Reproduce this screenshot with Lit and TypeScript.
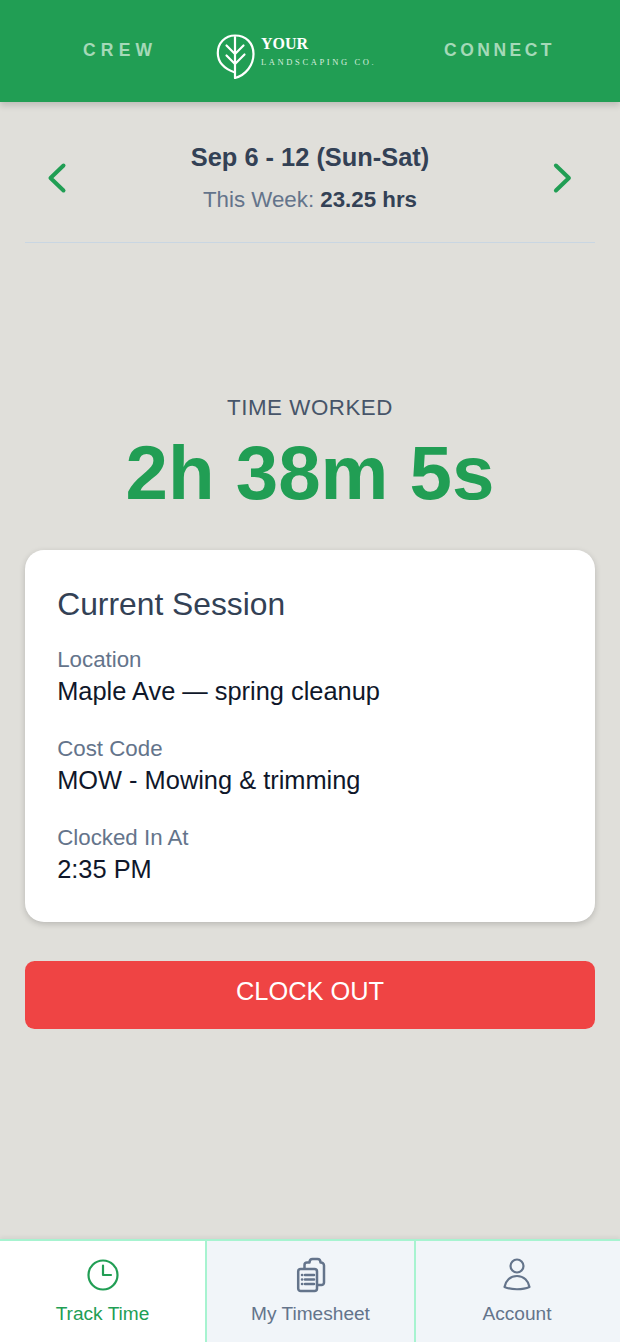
import { LitElement, html, css } from "lit";
import { customElement } from "lit/decorators.js";

@customElement("app-root")
export class AppRoot extends LitElement {
  static styles = css`
    :host { display: flex; flex-direction: column; width: 620px; height: 1342px; background: #e0dfda; font-family: "Liberation Sans", Arial, sans-serif; overflow: hidden; }
    .header { height: 102px; flex: none; box-sizing: border-box; padding: 0 0 0 83px; background: #219e54; box-shadow: 0 4px 6px rgba(0,0,0,.14); display: flex; align-items: center; position: relative; }
    .hlink { font-size: 17.5px; font-weight: 700; color: #a5d9b8; padding-bottom: 2px; }
    .crew { letter-spacing: 5.2px; width: 133px; }
    .connect { letter-spacing: 3.5px; margin-left: 69px; }
    .logo { display: flex; align-items: flex-start; gap: 5px; width: 159px; height: 46px; margin-top: 11px; }
    .logo svg { width: 40px; height: 46px; display: block; flex: none; }
    .logotext { display: flex; flex-direction: column; font-family: "Liberation Serif", serif; color: #fff; }
    .your { font-size: 16px; font-weight: 700; line-height: 18px; margin-top: 1px; }
    .co { font-size: 8.5px; letter-spacing: 2.62px; line-height: 10px; margin-top: 4px; color: #d5eddf; white-space: nowrap; }
    .week { margin: 0 25.4px; height: 141px; flex: none; border-bottom: 1px solid #c9d6e2; display: flex; align-items: center; justify-content: space-between; box-sizing: border-box; padding-top: 12px; }
    .week svg { width: 40px; height: 40px; display: block; flex: none; margin: 0 12px; }
    .weekmid { text-align: center; }
    .range { font-size: 25.4px; font-weight: 700; color: #334155; line-height: 30px; }
    .hours { font-size: 22.3px; color: #64748b; line-height: 30px; margin-top: 13px; }
    .hours b { color: #334155; }
    .timer { margin-top: 150px; text-align: center; flex: none; }
    .tlabel { font-size: 22.3px; color: #475569; line-height: 30px; letter-spacing: .56px; }
    .tvalue { font-size: 76.3px; font-weight: 700; color: #219e54; line-height: 88px; margin-top: 6px; }
    .card { margin: 33px 25.4px 0; height: 372px; box-sizing: border-box; flex: none; background: #fff; border-radius: 19px; padding: 32px 31.800px; box-shadow: 0 2px 6px rgba(0,0,0,.18); }
    .ctitle { font-size: 31.800px; color: #334155; line-height: 44px; margin-bottom: 19px; }
    .field { margin-bottom: 26px; }
    .flabel { font-size: 22.3px; color: #64748b; line-height: 30px; }
    .fvalue { font-size: 25.4px; color: #0f172a; line-height: 34px; margin-top: -1px; }
    .clock { margin: 39px 25.4px 0; height: 68px; flex: none; background: #ef4444; border-radius: 9.500px; color: #fff; font-size: 25.4px; display: flex; align-items: center; justify-content: center; padding-bottom: 7px; box-sizing: border-box; }
    .spacer { flex: 1; }
    .nav { flex: none; height: 103px; display: grid; grid-template-columns: 205px 209px 206px; box-shadow: 0 -2px 4px rgba(0,0,0,.06); }
    .tab { box-sizing: border-box; background: #f1f5f9; border-top: 2px solid #a7f3d0; display: flex; flex-direction: column; align-items: center; color: #64748b; font-size: 19.1px; padding-top: 16px; gap: 10px; }
    .tab + .tab { border-left: 2px solid #a7f3d0; }
    .tab.active { background: #fff; color: #219e54; }
    .tab.last { padding-right: 2px; }
    .tab svg { width: 36px; height: 36px; display: block; fill: none; stroke: currentColor; stroke-width: 2.200; stroke-linecap: round; stroke-linejoin: round; }
    .tab svg.sheet { stroke-width: 2.500; }
  `;
  render() {
    return html`
      <div class="header">
        <div class="hlink crew">CREW</div>
        <div class="logo">
          <svg viewBox="0 0 40 46" fill="none" stroke="#fff" stroke-width="2.2" stroke-linejoin="round" stroke-linecap="round">
            <path d="M19 44 C 30 41 37.500 31 37.500 20 C 37.500 9 30 1.500 19 1.500 C 9 1.500 1.800 9 1.800 19 C 1.800 29 9 35 19 38.500"/>
            <path d="M19 3 V 44 M19 20 L 10.500 11.500 M19 20 L 27.500 11.500 M19 30 L 10.500 21.500 M19 30 L 28.500 20.500"/>
          </svg>
          <div class="logotext"><div class="your">YOUR</div><div class="co">LANDSCAPING CO.</div></div>
        </div>
        <div class="hlink connect">CONNECT</div>
      </div>
      <div class="week">
        <svg viewBox="0 0 40 40" fill="none" stroke="#219e54" stroke-width="4" stroke-linecap="round" stroke-linejoin="round"><path d="M26.500 7.500 L 13.500 20 L 26.500 32.500"/></svg>
        <div class="weekmid">
          <div class="range">Sep 6 - 12 (Sun-Sat)</div>
          <div class="hours">This Week: <b>23.25 hrs</b></div>
        </div>
        <svg viewBox="0 0 40 40" fill="none" stroke="#219e54" stroke-width="4" stroke-linecap="round" stroke-linejoin="round"><path d="M12.900 7.500 L 25.900 20 L 12.900 32.500"/></svg>
      </div>
      <div class="timer">
        <div class="tlabel">TIME WORKED</div>
        <div class="tvalue">2h 38m 5s</div>
      </div>
      <div class="card">
        <div class="ctitle">Current Session</div>
        <div class="field"><div class="flabel">Location</div><div class="fvalue">Maple Ave — spring cleanup</div></div>
        <div class="field"><div class="flabel">Cost Code</div><div class="fvalue">MOW - Mowing &amp; trimming</div></div>
        <div class="field"><div class="flabel">Clocked In At</div><div class="fvalue">2:35 PM</div></div>
      </div>
      <div class="clock">CLOCK OUT</div>
      <div class="spacer"></div>
      <div class="nav">
        <div class="tab active">
          <svg viewBox="0 0 36 36"><circle cx="18" cy="18" r="14.500"/><path d="M18 8.500 V 18 H 26"/></svg>
          <span>Track Time</span>
        </div>
        <div class="tab">
          <svg class="sheet" viewBox="0 0 36 36"><path d="M11.500 11 V 8 a 2.500 2.500 0 0 1 2.500 -2.500 H 16.500 c 0 -2 1 -3.500 3 -3.500 h 5 c 2 0 3 1.500 3 3.500 a 3 3 0 0 1 3.500 3 V 25.500 a 2.500 2.500 0 0 1 -2.500 2.500 H 25"/><rect x="5.200" y="12" width="18.800" height="22" rx="2.500"/><path d="M12 18 H 21 M12 22.500 H 21 M12 27 H 21 M9 18 h .2 M9 22.500 h .2 M9 27 h .2"/></svg>
          <span>My Timesheet</span>
        </div>
        <div class="tab last">
          <svg viewBox="0 0 36 36"><circle cx="18" cy="9" r="6.500"/><path d="M5.500 30 C 6.500 24 11 19 18 19 C 25 19 29.500 24 30.500 30 C 24 33 12 33 5.500 30 Z"/></svg>
          <span>Account</span>
        </div>
      </div>
    `;
  }
}
